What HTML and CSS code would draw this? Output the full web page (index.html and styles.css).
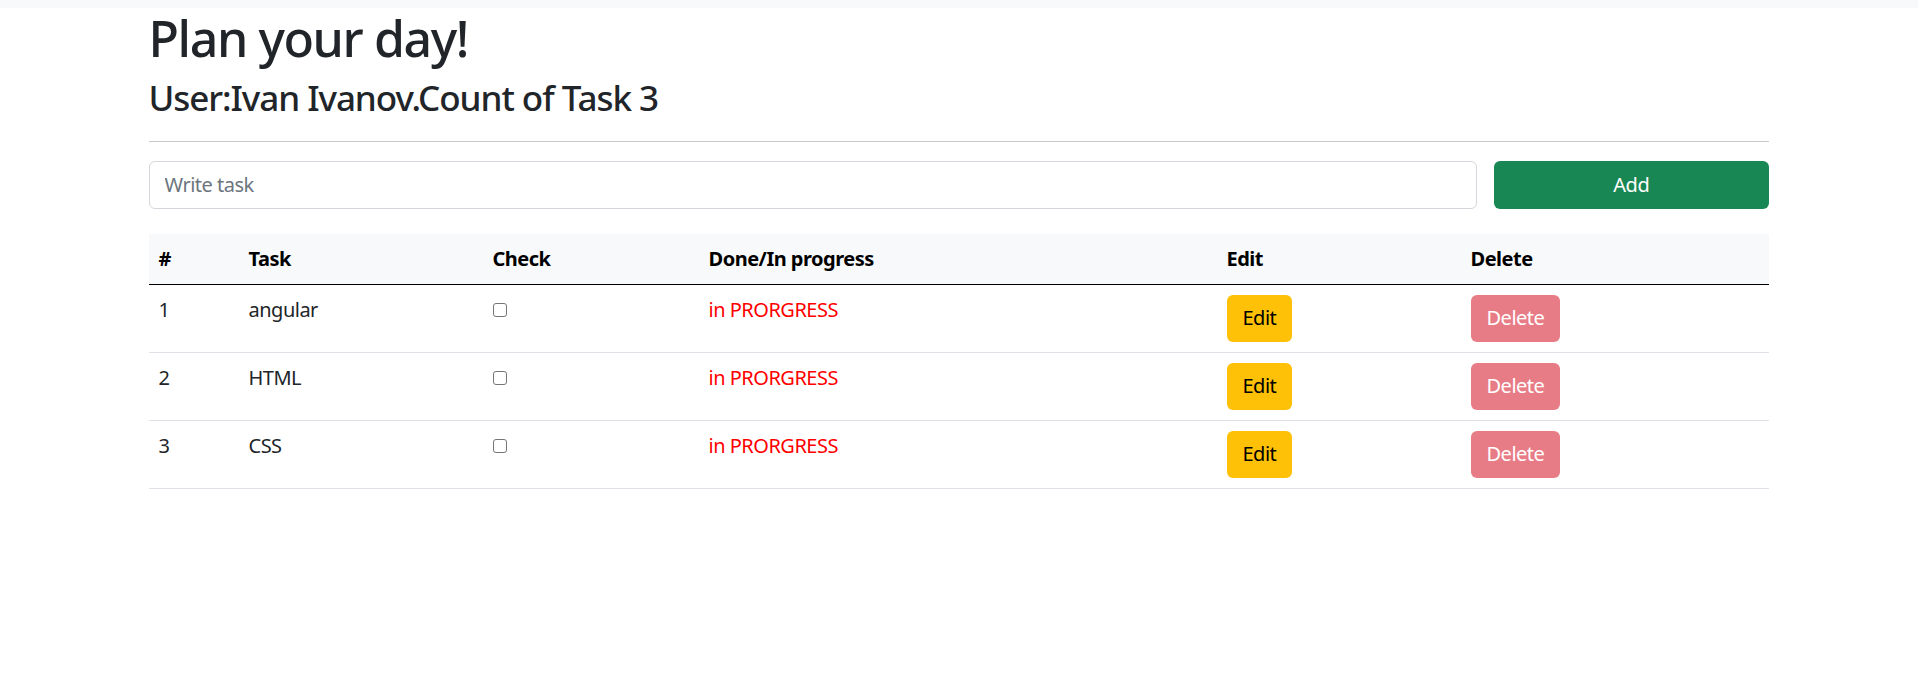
FILE: index.html
```html
<!DOCTYPE html>
<html lang="en">
<head>
<meta charset="utf-8">
<title>Plan your day!</title>
<link rel="stylesheet" href="styles.css">
</head>
<body>
<div class="topbar"></div>
<main class="container">
  <h1 class="title">Plan your day!</h1>
  <h3 class="subtitle">User:Ivan Ivanov.Count of Task 3</h3>
  <hr class="divider">
  <form class="add-form">
    <input class="task-input" type="text" placeholder="Write task">
    <button class="btn btn-add" type="button">Add</button>
  </form>
  <table class="tasks">
    <colgroup>
      <col class="c-num"><col class="c-task"><col class="c-check"><col class="c-status"><col class="c-edit"><col class="c-delete">
    </colgroup>
    <thead>
      <tr><th>#</th><th>Task</th><th>Check</th><th>Done/In progress</th><th>Edit</th><th>Delete</th></tr>
    </thead>
    <tbody>
      <tr>
        <td>1</td><td>angular</td><td><input class="check" type="checkbox"></td>
        <td class="status">in PRORGRESS</td>
        <td><button class="btn btn-edit" type="button">Edit</button></td>
        <td><button class="btn btn-delete" type="button" disabled>Delete</button></td>
      </tr>
      <tr>
        <td>2</td><td>HTML</td><td><input class="check" type="checkbox"></td>
        <td class="status">in PRORGRESS</td>
        <td><button class="btn btn-edit" type="button">Edit</button></td>
        <td><button class="btn btn-delete" type="button" disabled>Delete</button></td>
      </tr>
      <tr>
        <td>3</td><td>CSS</td><td><input class="check" type="checkbox"></td>
        <td class="status">in PRORGRESS</td>
        <td><button class="btn btn-edit" type="button">Edit</button></td>
        <td><button class="btn btn-delete" type="button" disabled>Delete</button></td>
      </tr>
    </tbody>
  </table>
</main>
</body>
</html>
```
FILE: styles.css
```css
* { box-sizing: border-box; }
html, body { margin: 0; padding: 0; background: #fff; }
body {
  font-family: "Noto Sans", "Open Sans", sans-serif;
  font-size: 20px;
  line-height: 30px;
  letter-spacing: -0.025em;
  color: #212529;
}
.topbar { height: 8px; background: #f8f9fa; }
.container { width: 1621px; padding-right: 1px; margin: 0 auto; }
.title {
  margin: 0 0 8.5px;
  font-size: 50px;
  line-height: 60px;
  font-weight: 500;
  letter-spacing: -0.028em;
  color: #212529;
}
.subtitle {
  margin: 0;
  font-size: 35px;
  line-height: 42px;
  font-weight: 500;
  letter-spacing: -0.030em;
  color: #212529;
}
.divider {
  margin: 22px 0 19.5px;
  border: 0;
  border-top: 1.25px solid #c8c9ca;
  height: 0;
}
.add-form { display: flex; gap: 17.5px; margin: 0 0 25px; }
.task-input {
  flex: 1;
  height: 47.5px;
  padding: 7.5px 15px;
  border: 1.25px solid #d3d6da;
  border-radius: 6px;
  font-family: inherit;
  font-size: 20px;
  line-height: 30px;
  letter-spacing: inherit;
  color: #212529;
  outline: none;
}
.task-input::placeholder { color: #6c757d; }
.btn {
  font-family: inherit;
  font-size: 20px;
  line-height: 30px;
  letter-spacing: inherit;
  padding: 7.5px 15px;
  border: 1.25px solid transparent;
  border-radius: 6px;
  cursor: pointer;
}
.btn-add { flex: 0 0 274.5px; background: #198754; color: #fff; }
.btn-edit { background: #ffc107; color: #000; }
.btn-delete { background: #e87c86; color: #fff; }
.tasks {
  width: 100%;
  table-layout: fixed;
  border-collapse: collapse;
}
.c-num { width: 90px; }
.c-task { width: 244px; }
.c-check { width: 216px; }
.c-status { width: 518px; }
.c-edit { width: 244px; }
.c-delete { width: 308px; }
.tasks th, .tasks td {
  padding: 10px;
  text-align: left;
  vertical-align: top;
}
.tasks thead tr { background: #f8f9fa; }
.tasks th {
  font-weight: 700;
  color: #000;
  border-bottom: 1.25px solid #000;
}
.tasks td { border-bottom: 1.25px solid #dee2e6; }
.status { color: #ff0000; }
.check {
  -webkit-appearance: none;
  appearance: none;
  display: block;
  width: 14.5px;
  height: 14.5px;
  margin: 8px 0 0;
  border: 1.25px solid #767676;
  border-radius: 3px;
  background: #fff;
}
```
